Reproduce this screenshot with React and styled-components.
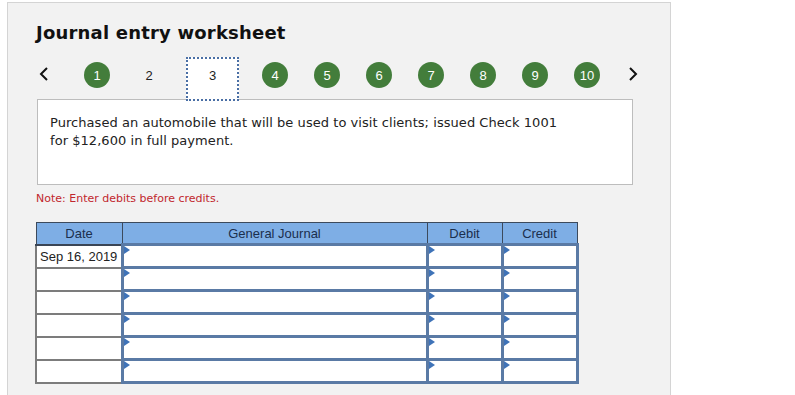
import React from 'react';
import styled, { createGlobalStyle } from 'styled-components';

const GlobalStyle = createGlobalStyle`
  html, body {
    margin: 0;
    padding: 0;
    background: #ffffff;
    overflow: hidden;
  }
`;

const Panel = styled.section`
  box-sizing: border-box;
  width: 664px;
  height: 420px;
  margin: 2px 0 0 7px;
  padding: 19px 0 0 28px;
  background: #f2f2f2;
  border: 1px solid #d4d4d4;
  font-family: 'DejaVu Sans', Verdana, sans-serif;
`;

const Title = styled.h2`
  margin: 0;
  font-size: 18px;
  line-height: 22px;
  letter-spacing: 0.2px;
  font-weight: bold;
  color: #111;
`;

const Nav = styled.nav`
  display: flex;
  align-items: flex-start;
  height: 42px;
  margin-top: 13px;
  position: relative;
  z-index: 1;
`;

const Arrow = styled.button`
  display: flex;
  justify-content: ${({ $side }) => ($side === 'left' ? 'flex-start' : 'center')};
  width: ${({ $side }) => ($side === 'left' ? '35px' : '40px')};
  height: 30px;
  padding: 10px 0 0 ${({ $side }) => ($side === 'left' ? '3px' : '0')};
  border: 0;
  background: none;
  box-sizing: border-box;
`;

const Step = styled.div`
  box-sizing: border-box;
  display: flex;
  justify-content: center;
  width: ${({ $current }) => ($current ? '53px' : '52px')};
  height: ${({ $current }) => ($current ? '44px' : '42px')};
  margin: ${({ $current }) => ($current ? '0 10px 0 11px' : '0')};
  padding-top: ${({ $current }) => ($current ? '3px' : '5px')};
  background: ${({ $current }) => ($current ? '#fff' : 'transparent')};
  border: ${({ $current }) => ($current ? '2px dotted #4a6fa5' : '0')};
  font-family: 'Liberation Sans', Arial, sans-serif;
  font-size: 13px;
  color: #222;
`;

const Dot = styled.span`
  display: flex;
  align-items: center;
  justify-content: center;
  width: 26px;
  height: 26px;
  border-radius: 50%;
  background: ${({ $done }) => ($done ? '#437d3b' : 'transparent')};
  color: ${({ $done }) => ($done ? '#fff' : '#222')};
  font-size: 13px;
`;

const Description = styled.div`
  box-sizing: border-box;
  width: 596px;
  height: 86px;
  margin-left: 1px;
  padding: 14px 0 0 12px;
  background: #fff;
  border: 1px solid #bdbdbd;
  font-size: 13px;
  line-height: 18px;
  letter-spacing: 0.05px;
  color: #222;
`;

const Note = styled.p`
  margin: 7px 0 0;
  font-size: 11px;
  line-height: 14px;
  color: #c1272d;
`;

const Table = styled.table`
  margin: 16px 0 0 -1px;
  border-collapse: collapse;
  table-layout: fixed;
  font-family: 'Liberation Sans', Arial, sans-serif;
  font-size: 13px;
`;

const Head = styled.th`
  height: 20px;
  padding: 0;
  background: #7eaee5;
  border: 1px solid #3c4a5c;
  border-bottom: 2px solid #3a4556;
  color: #1b2f4d;
  font-weight: normal;
  text-align: center;
`;

const DateCell = styled.td`
  height: 20px;
  padding: 0 0 0 3px;
  background: #fff;
  border: 2px solid #7c7c7c;
  color: #222;
  white-space: nowrap;
`;

const EntryCell = styled.td`
  position: relative;
  height: 20px;
  padding: 0;
  background: #fff;
  border: 3px solid #5a7aa5;
`;

const Marker = styled.span`
  position: absolute;
  top: 0;
  left: 0;
  width: 0;
  height: 0;
  border-top: 4px solid transparent;
  border-bottom: 4px solid transparent;
  border-left: 6px solid #3f73b8;
`;

const Chevron = ({ dir }) => (
  <svg width="10" height="14" viewBox="0 0 10 14">
    <polyline
      points={dir === 'left' ? '8,1 2,7 8,13' : '2,1 8,7 2,13'}
      fill="none"
      stroke="#111"
      strokeWidth="2"
    />
  </svg>
);

const steps = [1, 2, 3, 4, 5, 6, 7, 8, 9, 10];
const rows = ['Sep 16, 2019', '', '', '', '', ''];

const App = () => (
  <>
    <GlobalStyle />
    <Panel>
      <Title>Journal entry worksheet</Title>

      <Nav>
        <Arrow $side="left">
          <Chevron dir="left" />
        </Arrow>
        {steps.map((n) => (
          <Step key={n} $current={n === 3}>
            <Dot $done={n !== 2 && n !== 3}>{n}</Dot>
          </Step>
        ))}
        <Arrow $side="right">
          <Chevron dir="right" />
        </Arrow>
      </Nav>

      <Description>
        Purchased an automobile that will be used to visit clients; issued Check 1001
        <br />
        for $12,600 in full payment.
      </Description>

      <Note>Note: Enter debits before credits.</Note>

      <Table>
        <colgroup>
          <col style={{ width: 86 }} />
          <col style={{ width: 305 }} />
          <col style={{ width: 75 }} />
          <col style={{ width: 75 }} />
        </colgroup>
        <thead>
          <tr>
            <Head>Date</Head>
            <Head>General Journal</Head>
            <Head>Debit</Head>
            <Head>Credit</Head>
          </tr>
        </thead>
        <tbody>
          {rows.map((date, i) => (
            <tr key={i}>
              <DateCell>{date}</DateCell>
              <EntryCell>
                <Marker />
              </EntryCell>
              <EntryCell>
                <Marker />
              </EntryCell>
              <EntryCell>
                <Marker />
              </EntryCell>
            </tr>
          ))}
        </tbody>
      </Table>
    </Panel>
  </>
);

export default App;
